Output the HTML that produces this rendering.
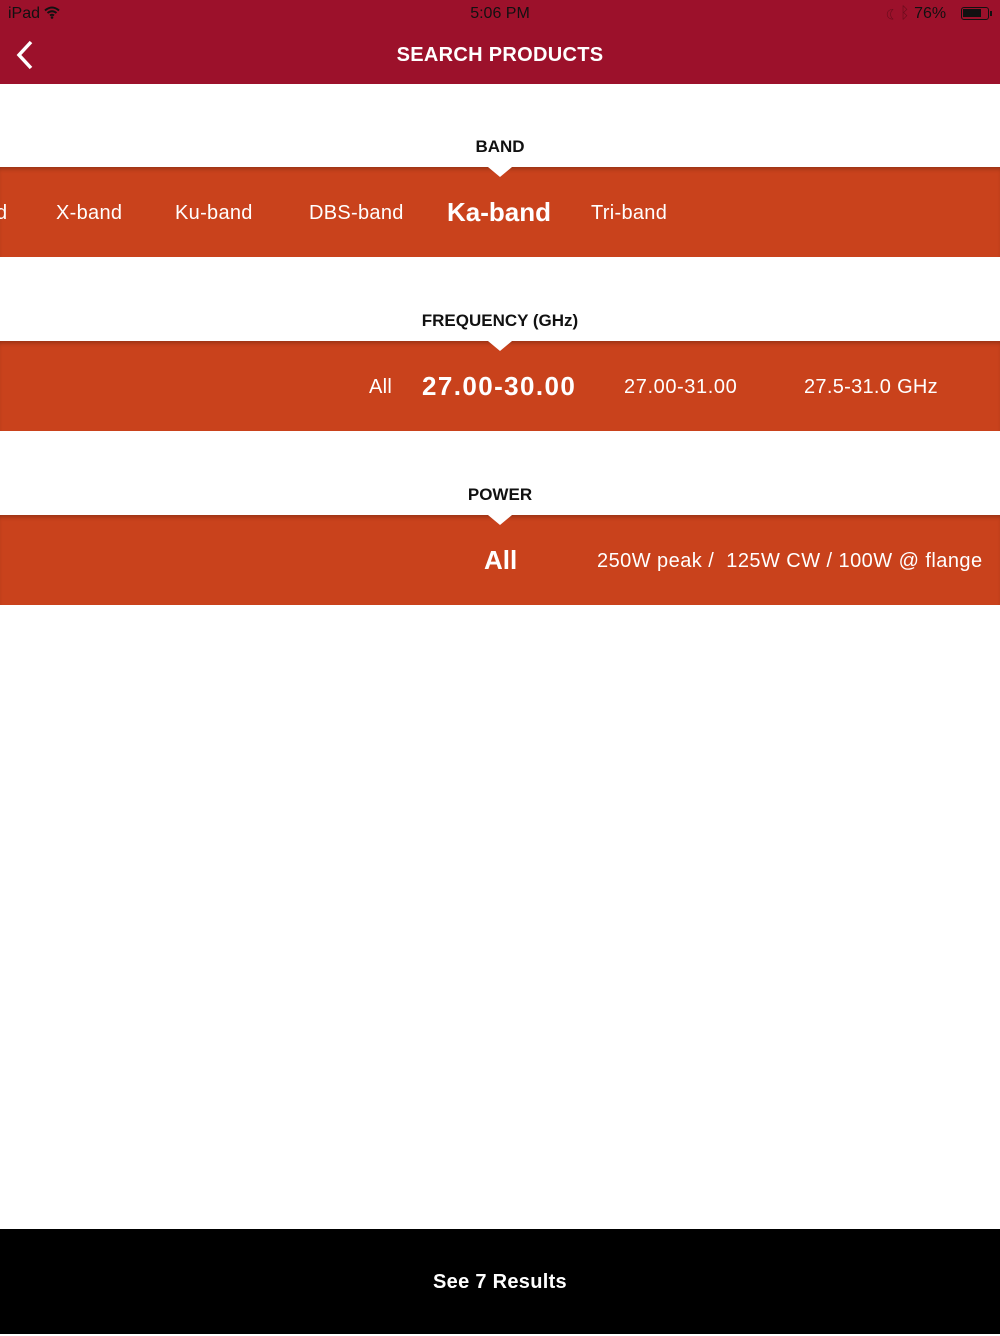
<!DOCTYPE html>
<html><head><meta charset="utf-8"><style>
*{margin:0;padding:0;box-sizing:border-box}
body{width:1000px;height:1334px;background:#fff;font-family:"Liberation Sans",sans-serif;position:relative;overflow:hidden}
.top{position:absolute;left:0;top:0;width:1000px;height:84px;background:#9c112b}
.sb{position:absolute;top:5px;font-size:16px;color:#111}
.title{position:absolute;top:44px;width:100%;text-align:center;color:#fff;font-weight:bold;font-size:20px;letter-spacing:.3px}
.lbl{position:absolute;width:100%;text-align:center;font-weight:bold;font-size:17px;color:#111}
.strip{position:absolute;left:0;width:1000px;height:90px;background:#c9421c;box-shadow:inset 0 4px 4px -2px rgba(0,0,0,.25)}
.notch{position:absolute;left:488px;top:0;width:0;height:0;border-left:12px solid transparent;border-right:12px solid transparent;border-top:10px solid #fff}
.it{position:absolute;color:#fff;font-size:20px;top:35px;white-space:nowrap;letter-spacing:.3px}
.sel{font-size:26px;font-weight:bold;top:30px;letter-spacing:0}
.bot{position:absolute;left:0;top:1229px;width:1000px;height:105px;background:#000;color:#fff;font-weight:bold;font-size:20px;text-align:center;line-height:107px;letter-spacing:.3px}
</style></head><body>
<div class="top">
<div class="sb" style="left:8px">iPad <svg width="16" height="13" viewBox="0 0 16 13" style="vertical-align:-1px"><path d="M1 4.5Q8-1.5 15 4.5M3.5 7Q8 3.5 12.5 7M6 9.5Q8 8 10 9.5" stroke="#111" stroke-width="2" fill="none"/><circle cx="8" cy="11.5" r="1.3" fill="#111"/></svg></div>
<div class="sb" style="left:0;width:1000px;text-align:center">5:06 PM</div>
<div class="sb" style="left:886px;color:#6a0c1c">☾ <span>ᛒ</span> <span style="color:#111">76%</span></div>
<div style="position:absolute;left:961px;top:7px;width:28px;height:13px;border:1.5px solid #111;border-radius:3px"><div style="width:18px;height:8px;margin:1px;background:#111"></div></div>
<div style="position:absolute;left:990px;top:11px;width:2px;height:5px;background:#111"></div>
<svg style="position:absolute;left:14px;top:40px" width="22" height="30" viewBox="0 0 22 30"><path d="M17 2L5 15L17 28" stroke="#fff" stroke-width="3.5" fill="none"/></svg>
<div class="title">SEARCH PRODUCTS</div>
</div>

<div class="lbl" style="top:137px">BAND</div>
<div class="strip" style="top:167px"><div class="notch"></div>
<div class="it" style="left:-4px">d</div>
<div class="it" style="left:56px">X-band</div>
<div class="it" style="left:175px">Ku-band</div>
<div class="it" style="left:309px">DBS-band</div>
<div class="it sel" style="left:447px">Ka-band</div>
<div class="it" style="left:591px">Tri-band</div>
</div>

<div class="lbl" style="top:311px">FREQUENCY (GHz)</div>
<div class="strip" style="top:341px"><div class="notch"></div>
<div class="it" style="left:369px">All</div>
<div class="it sel" style="left:422px;letter-spacing:1.4px">27.00-30.00</div>
<div class="it" style="left:624px;letter-spacing:.6px">27.00-31.00</div>
<div class="it" style="left:804px">27.5-31.0 GHz</div>
</div>

<div class="lbl" style="top:485px">POWER</div>
<div class="strip" style="top:515px"><div class="notch"></div>
<div class="it sel" style="left:484px">All</div>
<div class="it" style="left:597px;letter-spacing:.45px">250W peak /&nbsp; 125W CW / 100W @ flange</div>
</div>

<div class="bot">See 7 Results</div>
</body></html>
